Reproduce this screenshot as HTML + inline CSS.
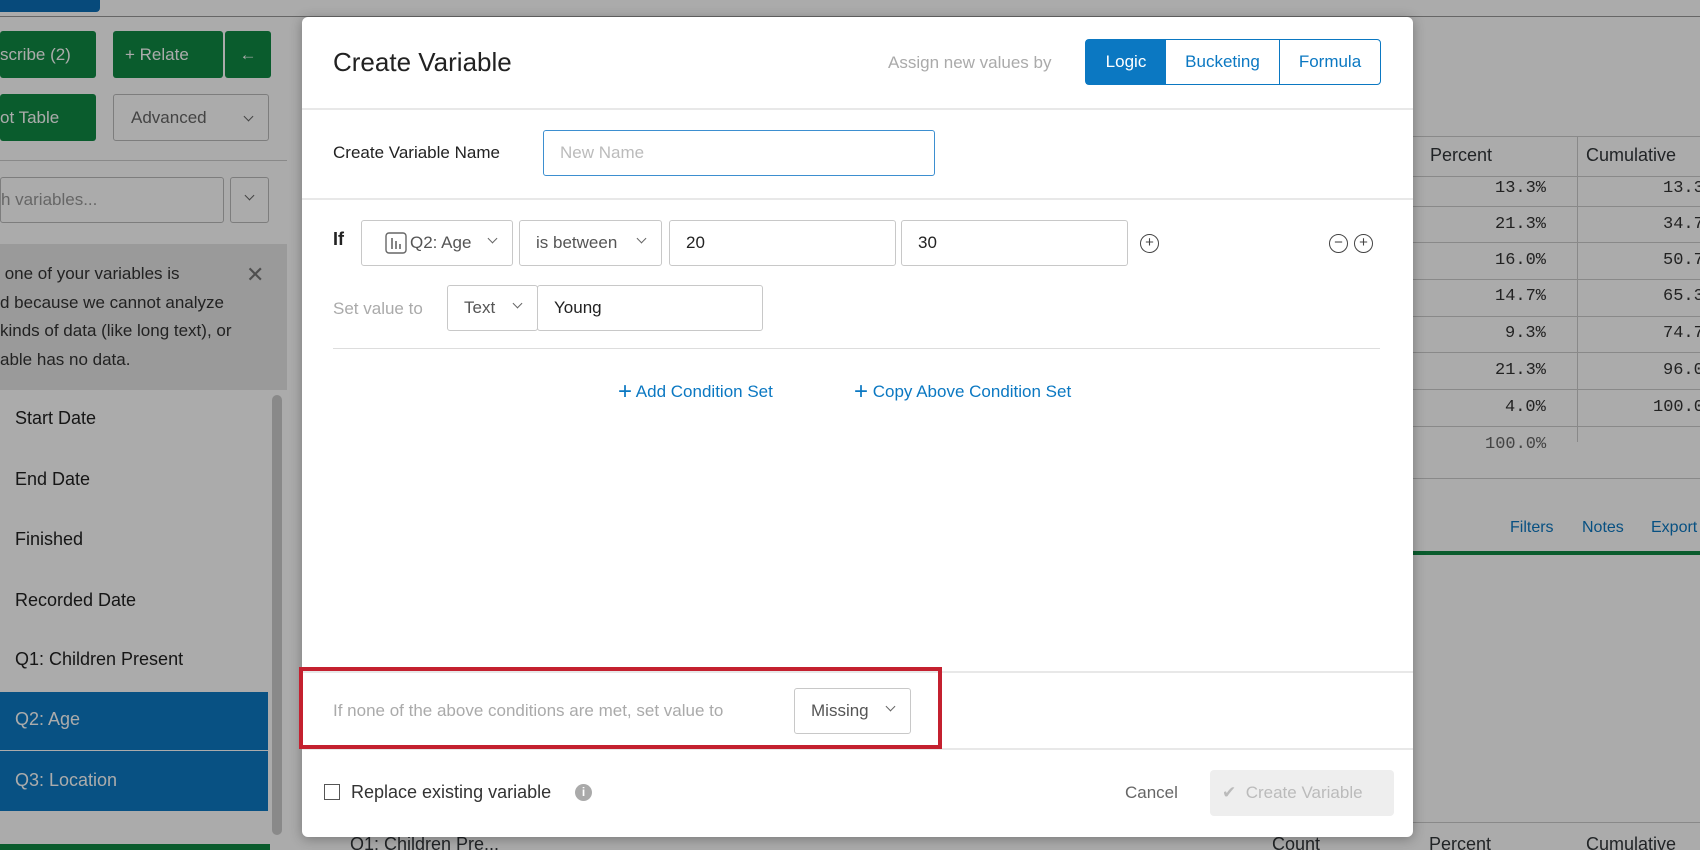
<!DOCTYPE html>
<html style="width:1700px;height:850px;overflow:hidden"><head><meta charset="utf-8">
<style>
*{box-sizing:border-box;margin:0;padding:0}
body{width:1700px;height:850px;overflow:hidden;position:relative;background:#fff;font-family:"Liberation Sans",sans-serif;color:#32363a}
.a{position:absolute}
.btn{position:absolute;border-radius:3px;font-size:17px;display:flex;align-items:center}
.g{background:#0f8a43;color:#fff}
.ol{border:1px solid #bbb;background:#fff;color:#666}
.li{position:absolute;left:15px;font-size:18px;color:#222}
.td{position:absolute;font-family:"Liberation Mono",monospace;font-size:17px;color:#333}
.hl{position:absolute;height:1px;background:#ccc}
#ov{position:absolute;left:0;top:0;width:1700px;height:850px;background:rgba(0,0,0,0.33)}
#m{position:absolute;left:302px;top:17px;width:1111px;height:820px;background:#fff;border-radius:6px;box-shadow:0 2px 12px rgba(0,0,0,.3)}
.in{position:absolute;border:1px solid #c8c8c8;border-radius:3px;background:#fff;font-size:17px;display:flex;align-items:center;padding-left:16px;color:#222}
.chev{display:inline-block;width:7px;height:7px;border-right:1.3px solid #666;border-bottom:1.3px solid #666;transform:rotate(45deg);margin-top:-4px}
.circ{position:absolute;width:19px;height:19px;border:1.3px solid #444;border-radius:50%;font-size:15px;line-height:16px;text-align:center;color:#444}
.blue{color:#0b78c2}
</style></head><body>
<div class="a" style="left:0;top:0;width:100px;height:12px;background:#0b6fb8;border-radius:0 0 4px 0"></div>
<div class="hl" style="left:0;top:16px;width:1700px;background:#999"></div>
<div class="btn g" style="left:0;top:31px;width:96px;height:47px;padding-left:0">scribe (2)</div>
<div class="btn g" style="left:113px;top:31px;width:110px;height:47px;padding-left:12px">+ Relate</div>
<div class="btn g" style="left:225px;top:31px;width:46px;height:47px;justify-content:center">←</div>
<div class="btn g" style="left:0;top:94px;width:96px;height:47px">ot Table</div>
<div class="btn ol" style="left:113px;top:94px;width:156px;height:47px;padding-left:17px">Advanced<span class="chev" style="position:absolute;right:16px;top:22px"></span></div>
<div class="hl" style="left:0;top:160px;width:287px"></div>
<div class="btn ol" style="left:0;top:177px;width:224px;height:46px;color:#999">h variables...</div>
<div class="btn ol" style="left:230px;top:177px;width:39px;height:46px"><span class="chev" style="position:absolute;left:15px;top:18px"></span></div>
<div class="a" style="left:0;top:244px;width:287px;height:146px;background:#e6e6e6;font-size:17px;line-height:28.5px;padding-top:16px;color:#333">&nbsp;one of your variables is<br>d because we cannot analyze<br>kinds of data (like long text), or<br>able has no data.</div>
<div class="a" style="left:246px;top:262px;font-size:22px;color:#777">✕</div>
<div class="li" style="top:408px">Start Date</div>
<div class="li" style="top:469px">End Date</div>
<div class="li" style="top:529px">Finished</div>
<div class="li" style="top:590px">Recorded Date</div>
<div class="li" style="top:649px">Q1: Children Present</div>
<div class="a" style="left:0;top:692px;width:268px;height:58px;background:#0c7ac4"></div>
<div class="a" style="left:0;top:751px;width:268px;height:60px;background:#0c7ac4"></div>
<div class="li" style="top:709px;color:#fff">Q2: Age</div>
<div class="li" style="top:770px;color:#fff">Q3: Location</div>
<div class="a" style="left:272px;top:395px;width:10px;height:440px;background:#ccc;border-radius:5px"></div>
<div class="a" style="left:0;top:844px;width:270px;height:6px;background:#0f8a43"></div>
<div class="hl" style="left:1413px;top:136px;width:300px"></div>
<div class="a" style="left:1430px;top:145px;font-size:18px">Percent</div>
<div class="a" style="left:1586px;top:145px;font-size:18px">Cumulative</div>
<div class="a" style="left:1577px;top:136px;width:1px;height:306px;background:#ccc"></div>
<div class="hl" style="left:1413px;top:176px;width:300px"></div>
<div class="td" style="left:1495px;top:179px">13.3%</div><div class="td" style="left:1663px;top:179px">13.3</div>
<div class="hl" style="left:1413px;top:206px;width:300px"></div>
<div class="td" style="left:1495px;top:215px">21.3%</div><div class="td" style="left:1663px;top:215px">34.7</div>
<div class="hl" style="left:1413px;top:242px;width:300px"></div>
<div class="td" style="left:1495px;top:251px">16.0%</div><div class="td" style="left:1663px;top:251px">50.7</div>
<div class="hl" style="left:1413px;top:279px;width:300px"></div>
<div class="td" style="left:1495px;top:287px">14.7%</div><div class="td" style="left:1663px;top:287px">65.3</div>
<div class="hl" style="left:1413px;top:316px;width:300px"></div>
<div class="td" style="left:1505px;top:324px">9.3%</div><div class="td" style="left:1663px;top:324px">74.7</div>
<div class="hl" style="left:1413px;top:352px;width:300px"></div>
<div class="td" style="left:1495px;top:361px">21.3%</div><div class="td" style="left:1663px;top:361px">96.0</div>
<div class="hl" style="left:1413px;top:389px;width:300px"></div>
<div class="td" style="left:1505px;top:398px">4.0%</div><div class="td" style="left:1653px;top:398px">100.0</div>
<div class="hl" style="left:1413px;top:426px;width:300px"></div>
<div class="td" style="left:1485px;top:435px;color:#666">100.0%</div>
<div class="hl" style="left:1413px;top:478px;width:300px"></div>
<div class="a blue" style="left:1510px;top:519px;font-size:16px">Filters</div>
<div class="a blue" style="left:1582px;top:519px;font-size:16px">Notes</div>
<div class="a blue" style="left:1651px;top:519px;font-size:16px">Export</div>
<div class="a" style="left:1413px;top:551px;width:300px;height:4px;background:#0f8a43"></div>
<div class="hl" style="left:330px;top:822px;width:1400px"></div>
<div class="a" style="left:350px;top:834px;font-size:18px">Q1: Children Pre...</div>
<div class="a" style="left:1272px;top:834px;font-size:18px">Count</div>
<div class="a" style="left:1429px;top:834px;font-size:18px">Percent</div>
<div class="a" style="left:1586px;top:834px;font-size:18px">Cumulative</div>
<div id="ov"></div>
<div id="m">
 <div class="a" style="left:31px;top:30px;font-size:26px;color:#222">Create Variable</div>
 <div class="a" style="left:586px;top:36px;font-size:17px;color:#aaa">Assign new values by</div>
 <div class="a" style="left:783px;top:22px;width:296px;height:46px;border:1.5px solid #0b78c2;border-radius:4px;display:flex;font-size:17px">
  <div style="width:80px;background:#0b78c2;color:#fff;display:flex;align-items:center;justify-content:center">Logic</div>
  <div style="width:114px;color:#0b78c2;display:flex;align-items:center;justify-content:center;border-right:1.5px solid #0b78c2">Bucketing</div>
  <div style="flex:1;color:#0b78c2;display:flex;align-items:center;justify-content:center">Formula</div>
 </div>
 <div class="hl" style="left:0;top:91px;width:1111px;background:#e8e8e8;height:2px"></div>
 <div class="a" style="left:31px;top:126px;font-size:17px;color:#222">Create Variable Name</div>
 <div class="in" style="left:241px;top:113px;width:392px;height:46px;border:1.5px solid #3d8fd0;color:#bbb">New Name</div>
 <div class="hl" style="left:0;top:181px;width:1111px;background:#e8e8e8;height:2px"></div>
 <div class="a" style="left:31px;top:212px;font-size:18px;font-weight:bold;color:#222">If</div>
 <div class="in" style="left:59px;top:203px;width:152px;height:46px;padding-left:23px;color:#555">
  <svg width="22" height="22" viewBox="0 0 22 22" style="margin-right:3px"><rect x="1" y="1" width="20" height="20" rx="3" fill="none" stroke="#666" stroke-width="1.4"/><path d="M7 6v11M11 9v8M15 12v5" stroke="#666" stroke-width="1.6"/></svg>Q2: Age<span class="chev" style="position:absolute;right:16px;top:18px"></span></div>
 <div class="in" style="left:217px;top:203px;width:143px;height:46px;color:#555">is between<span class="chev" style="position:absolute;right:16px;top:18px"></span></div>
 <div class="in" style="left:367px;top:203px;width:227px;height:46px">20</div>
 <div class="in" style="left:599px;top:203px;width:227px;height:46px">30</div>
 <div class="circ" style="left:838px;top:217px">+</div>
 <div class="circ" style="left:1027px;top:217px">−</div>
 <div class="circ" style="left:1052px;top:217px">+</div>
 <div class="a" style="left:31px;top:282px;font-size:17px;color:#aaa">Set value to</div>
 <div class="in" style="left:145px;top:268px;width:91px;height:46px;color:#555">Text<span class="chev" style="position:absolute;right:16px;top:18px"></span></div>
 <div class="in" style="left:235px;top:268px;width:226px;height:46px">Young</div>
 <div class="hl" style="left:31px;top:331px;width:1047px;background:#ddd"></div>
 <div class="a blue" style="left:316px;top:361px;font-size:17px"><b style="font-size:24px;font-weight:normal;vertical-align:-2px">+</b> Add Condition Set</div>
 <div class="a blue" style="left:552px;top:361px;font-size:17px"><b style="font-size:24px;font-weight:normal;vertical-align:-2px">+</b> Copy Above Condition Set</div>
 <div class="hl" style="left:0;top:654px;width:1111px;background:#e8e8e8;height:2px"></div>
 <div class="a" style="left:31px;top:684px;font-size:17px;color:#aaa">If none of the above conditions are met, set value to</div>
 <div class="in" style="left:492px;top:671px;width:117px;height:46px;color:#555">Missing<span class="chev" style="position:absolute;right:16px;top:18px"></span></div>
 <div class="hl" style="left:0;top:731px;width:1111px;background:#e8e8e8;height:2px"></div>
 <div class="a" style="left:22px;top:767px;width:16px;height:16px;border:1.5px solid #555"></div>
 <div class="a" style="left:49px;top:765px;font-size:18px;color:#333">Replace existing variable</div>
 <div class="a" style="left:273px;top:767px;width:17px;height:17px;border-radius:50%;background:#aaa;color:#fff;font-size:12px;text-align:center;line-height:17px;font-weight:bold">i</div>
 <div class="a" style="left:823px;top:766px;font-size:17px;color:#666">Cancel</div>
 <div class="a" style="left:908px;top:753px;width:184px;height:46px;background:#eee;border-radius:4px;color:#bbb;font-size:17px;display:flex;align-items:center;padding-left:12px">✔&nbsp;&nbsp;Create Variable</div>
</div>
<div class="a" style="left:299px;top:667px;width:643px;height:82px;border:4.5px solid #c4202f"></div>
</body></html>
